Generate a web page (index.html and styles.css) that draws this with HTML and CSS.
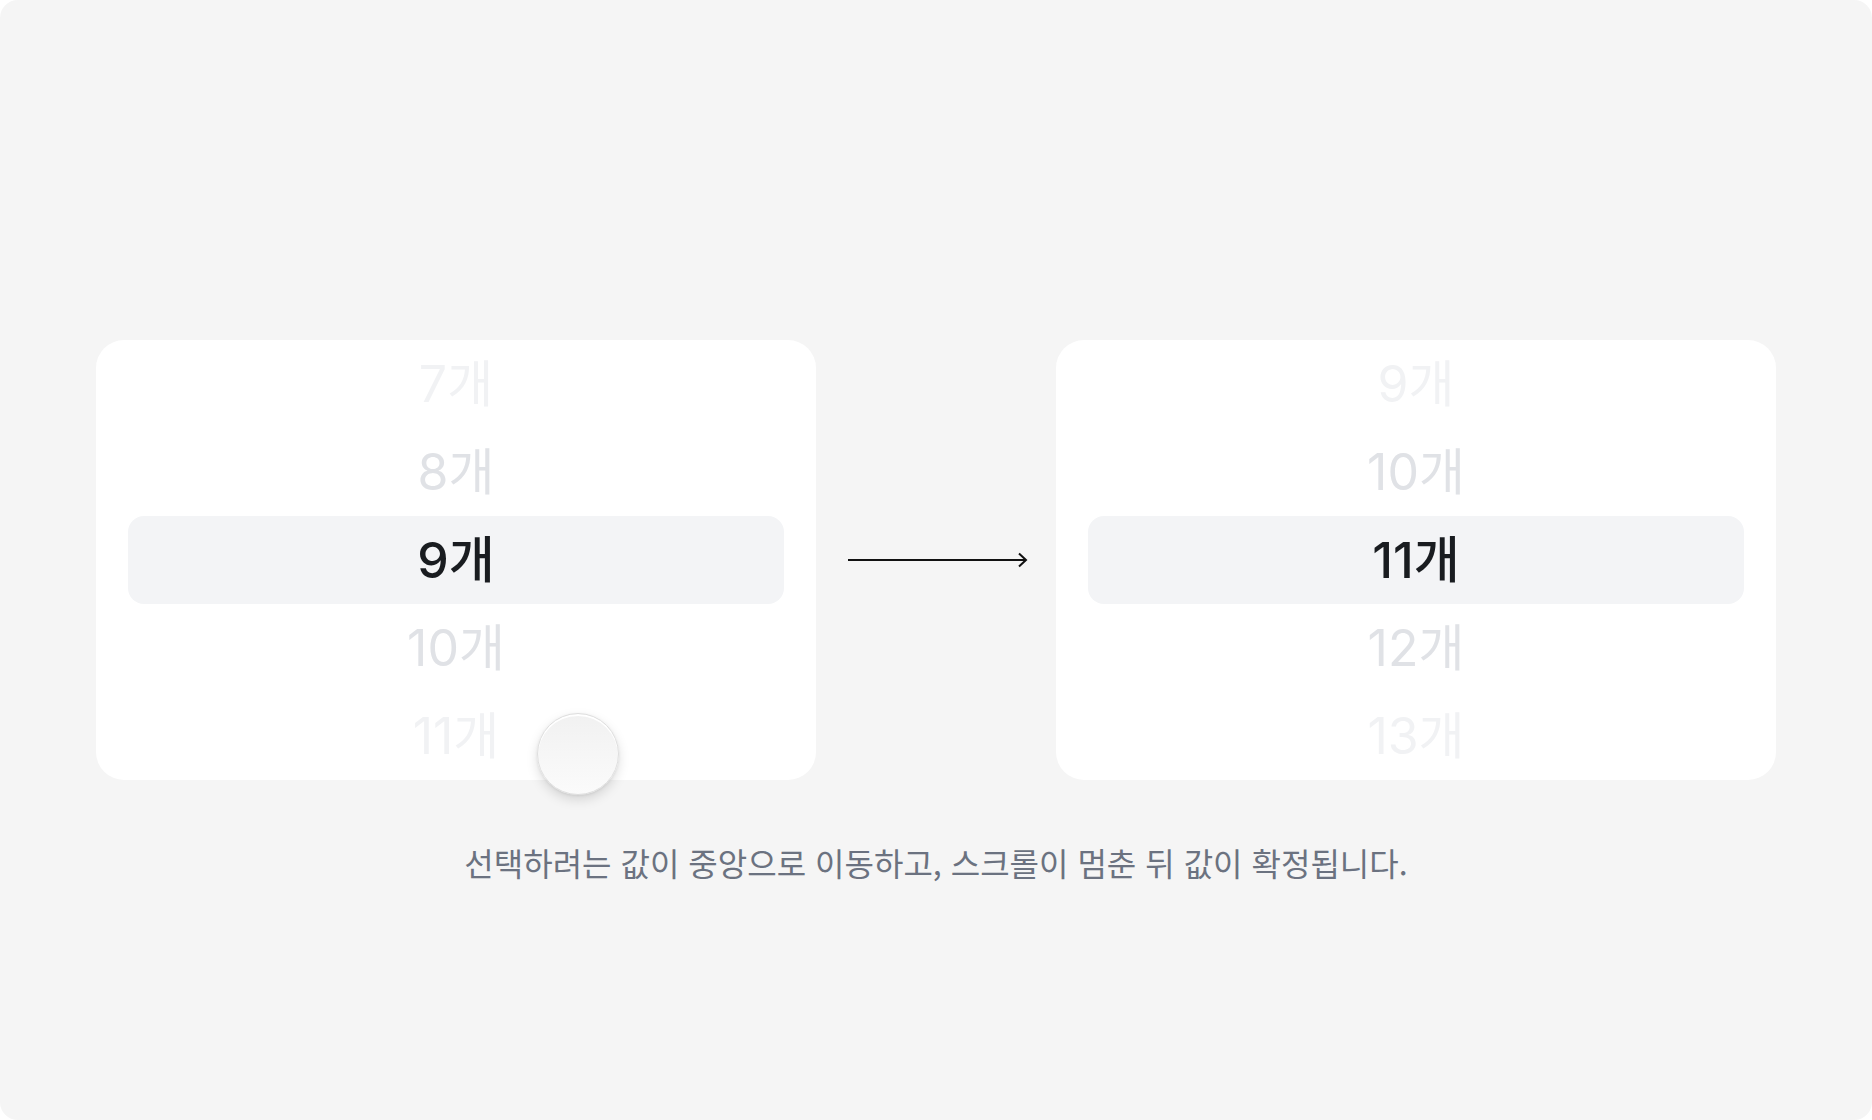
FILE: index.html
```html
<!DOCTYPE html>
<html lang="ko">
<head>
<meta charset="utf-8">
<title>Picker</title>
<link rel="stylesheet" href="styles.css">
</head>
<body>
<div class="page">
  <div class="stage">
    <div class="card">
      <div class="item far">7개</div>
      <div class="item near">8개</div>
      <div class="item selected">9개</div>
      <div class="item near">10개</div>
      <div class="item far">11개</div>
      <div class="knob"></div>
    </div>
    <div class="arrow-wrap">
      <svg class="arrow" width="182" height="16" viewBox="0 0 182 16" fill="none" stroke="#111" stroke-width="2">
        <line x1="1" y1="8" x2="179" y2="8"/>
        <polyline points="172,1.5 179,8 172,14.5" stroke-linejoin="miter"/>
      </svg>
    </div>
    <div class="card">
      <div class="item far">9개</div>
      <div class="item near">10개</div>
      <div class="item selected">11개</div>
      <div class="item near">12개</div>
      <div class="item far">13개</div>
    </div>
  </div>
  <p class="caption">선택하려는 값이 중앙으로 이동하고, 스크롤이 멈춘 뒤 값이 확정됩니다.</p>
</div>
</body>
</html>
```
FILE: styles.css
```css
html, body {
  margin: 0;
  padding: 0;
  background: #ffffff;
}
.page {
  width: 1872px;
  height: 1120px;
  box-sizing: border-box;
  background: #f5f5f5;
  border-radius: 18px;
  padding-top: 340px;
  display: flex;
  flex-direction: column;
  align-items: center;
  font-family: Inter, "Noto Sans CJK KR", sans-serif;
}
.stage {
  display: flex;
  align-items: center;
}
.card {
  position: relative;
  width: 720px;
  height: 440px;
  box-sizing: border-box;
  padding: 0 32px;
  background: #ffffff;
  border-radius: 28px;
  display: flex;
  flex-direction: column;
}
.item {
  height: 88px;
  display: flex;
  align-items: center;
  justify-content: center;
  font-size: 50px;
  font-weight: 400;
  line-height: 1;
}
.item.far { color: #f1f2f4; }
.item.near { color: #e0e2e6; }
.item.selected {
  color: #191c20;
  background: #f3f4f6;
  border-radius: 16px;
  font-weight: 500;
}
.arrow-wrap {
  width: 240px;
  display: flex;
  justify-content: center;
  padding-left: 3px;
  box-sizing: border-box;
}
.arrow { display: block; }
.knob {
  position: absolute;
  left: 441px;
  top: 373px;
  width: 82px;
  height: 82px;
  box-sizing: border-box;
  border-radius: 50%;
  border: 1.5px solid #dedede;
  background: linear-gradient(180deg, #f1f1f1 0%, #f6f6f6 50%, #fbfbfb 100%);
  box-shadow: inset 0 2px 0 #ffffff, 0 5px 12px rgba(0, 0, 0, 0.13), 0 1px 3px rgba(0, 0, 0, 0.08);
}
.caption {
  margin: 60px 0 0;
  font-family: "Noto Sans CJK KR", sans-serif;
  font-size: 32px;
  line-height: 44px;
  color: #6b7280;
  font-weight: 400;
}
```
